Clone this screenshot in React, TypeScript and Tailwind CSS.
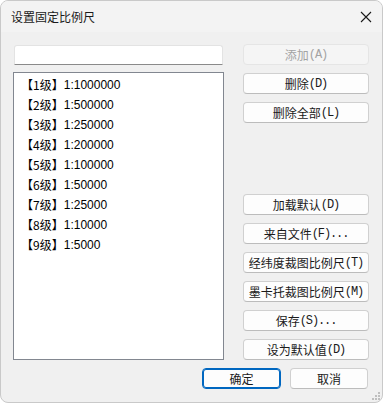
import React from "react";

const font = { fontFamily: '"Noto Sans CJK SC", "Noto Sans", sans-serif' };

function Label({ text }: { text: string }) {
  const parts = text.match(/[\u0000-\u00ff]+|[^\u0000-\u00ff]+/g) || [];
  return (
    <span className="flex items-center leading-none whitespace-nowrap">
      {parts.map((p, i) =>
        /^[\u0000-\u00ff]+$/.test(p) ? (
          <span key={i} className="text-[12px] tracking-[-1.1px]" style={{ fontFamily: '"Liberation Mono", monospace' }}>
            {p}
          </span>
        ) : (
          <span key={i} className="text-[12px]">{p}</span>
        )
      )}
    </span>
  );
}

function Btn({ label, disabled, className = "" }: { label: string; disabled?: boolean; className?: string }) {
  return (
    <div
      className={
        "h-[21px] flex items-center justify-center rounded-[4px] border text-[12px] leading-none " +
        (disabled
          ? "bg-[#f5f5f5] border-[#e5e5e5] text-[#a3a3a3] "
          : "bg-[#fdfdfd] border-[#d0d0d0] border-b-[#bcbcbc] text-[#1a1a1a] ") +
        className
      }
    >
      <Label text={label} />
    </div>
  );
}

const items = [
  "1:1000000",
  "1:500000",
  "1:250000",
  "1:200000",
  "1:100000",
  "1:50000",
  "1:25000",
  "1:10000",
  "1:5000",
];

export default function App() {
  return (
    <div className="w-[383px] h-[403px] bg-white" style={font}>
      <div className="w-[383px] h-[403px] rounded-[8px] border border-[#c9c9c9] bg-[#f0f0f0] overflow-hidden relative flex flex-col">
        <div className="h-[31px] bg-[#f3f3f3] flex items-center justify-between pl-[10px] pr-[9px] shrink-0">
          <span className="text-[12px] text-[#1a1a1a] leading-none">设置固定比例尺</span>
          <svg width="12" height="12" viewBox="0 0 12 12" className="mr-[1px]">
            <path d="M1 1 L11 11 M11 1 L1 11" stroke="#1a1a1a" strokeWidth="1.1" fill="none" />
          </svg>
        </div>
        <div className="flex-1 flex flex-col">
          <div className="flex pt-[12px] pl-[12px]">
            <div className="w-[211px] flex flex-col">
              <div className="mx-[1px] mt-[1px] h-[20px] bg-white border border-[#e3e3e3] border-b-[#8a8a8a] rounded-t-[3px]" />
              <div className="mt-[7px] h-[288px] bg-white border border-[#828790] pt-[2px]">
                {items.map((t, i) => (
                  <div key={i} className="h-[20px] flex items-center pl-[7px] text-[12px] text-black leading-none whitespace-nowrap">
                    <span>【{i + 1}级】</span>
                    <span style={{ fontFamily: '"Liberation Sans", sans-serif' }} className="text-[12px]">{t}</span>
                  </div>
                ))}
              </div>
            </div>
            <div className="w-[126px] ml-[19px] flex flex-col">
              <Btn label="添加(A)" disabled />
              <Btn label="删除(D)" className="mt-[8px]" />
              <Btn label="删除全部(L)" className="mt-[8px]" />
              <Btn label="加载默认(D)" className="mt-[71px]" />
              <Btn label="来自文件(F)..." className="mt-[8px]" />
              <Btn label="经纬度裁图比例尺(T)" className="mt-[8px]" />
              <Btn label="墨卡托裁图比例尺(M)" className="mt-[8px]" />
              <Btn label="保存(S)..." className="mt-[8px]" />
              <Btn label="设为默认值(D)" className="mt-[8px]" />
            </div>
          </div>
          <div className="flex justify-end pr-[14px] mt-[8px] gap-[9px]">
            <div className="w-[79px] h-[21px] flex items-center justify-center rounded-[4px] border border-[#0067c0] ring-1 ring-inset ring-[#0067c0] bg-[#fdfdfd] text-[12px] leading-none text-[#1a1a1a]">
              确定
            </div>
            <div className="w-[78px] h-[21px] flex items-center justify-center rounded-[4px] border border-[#d0d0d0] border-b-[#bcbcbc] bg-[#fdfdfd] text-[12px] leading-none text-[#1a1a1a]">
              取消
            </div>
          </div>
        </div>
        <svg width="8" height="8" viewBox="0 0 8 8" className="absolute right-[2px] bottom-[2px]">
          <rect x="6" y="0" width="2" height="2" fill="#bfbfbf" />
          <rect x="3" y="3" width="2" height="2" fill="#bfbfbf" />
          <rect x="6" y="3" width="2" height="2" fill="#bfbfbf" />
          <rect x="0" y="6" width="2" height="2" fill="#bfbfbf" />
          <rect x="3" y="6" width="2" height="2" fill="#bfbfbf" />
          <rect x="6" y="6" width="2" height="2" fill="#bfbfbf" />
        </svg>
      </div>
    </div>
  );
}
